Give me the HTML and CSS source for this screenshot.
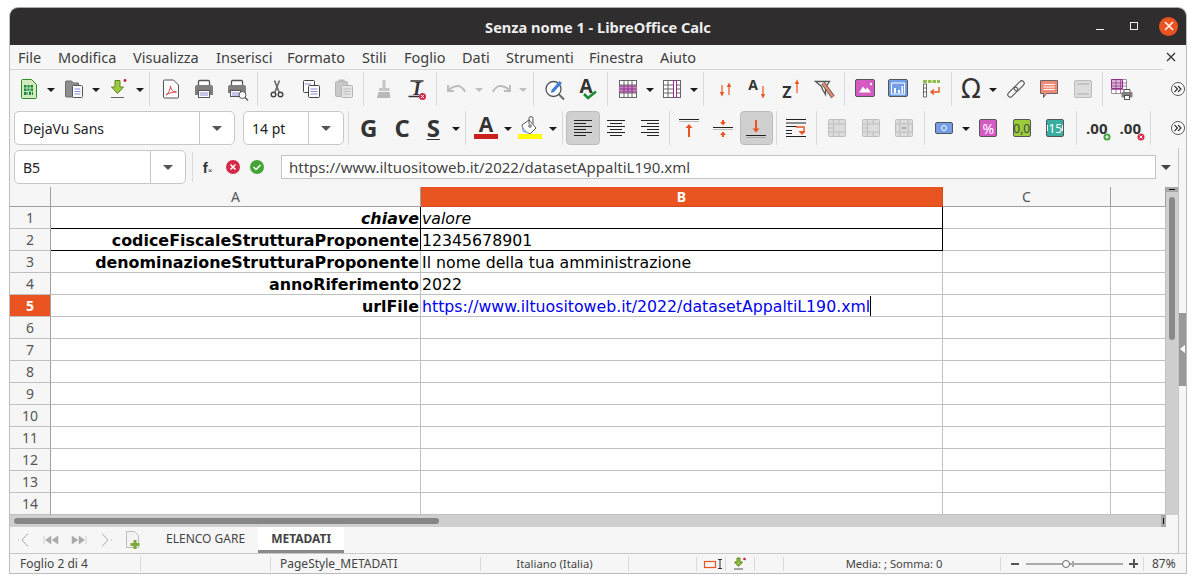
FILE: index.html
```html
<!DOCTYPE html>
<html lang="it">
<head>
  <meta charset="UTF-8">
  <title>Senza nome 1 - LibreOffice Calc</title>
  <link rel="stylesheet" href="styles.css">
</head>
<body>
<div class="window">

  <!-- title bar -->
  <div class="titlebar">
    <span class="title">Senza nome 1 - LibreOffice Calc</span>
    <div class="winbtns">
      <span class="win-min"></span>
      <span class="win-max"></span>
      <span class="win-close"><svg width="10" height="10" viewBox="0 0 10 10"><path d="M1 1l8 8M9 1l-8 8" stroke="#fff" stroke-width="1.5"/></svg></span>
    </div>
  </div>

  <!-- menu -->
  <div class="menubar">
    <span class="menu m1">File</span>
    <span class="menu m2">Modifica</span>
    <span class="menu m3">Visualizza</span>
    <span class="menu m4">Inserisci</span>
    <span class="menu m5">Formato</span>
    <span class="menu m6">Stili</span>
    <span class="menu m7">Foglio</span>
    <span class="menu m8">Dati</span>
    <span class="menu m9">Strumenti</span>
    <span class="menu m10">Finestra</span>
    <span class="menu m11">Aiuto</span>
    <span class="menu-close"><svg width="10" height="10" viewBox="0 0 10 10"><path d="M1 1l8 8M9 1l-8 8" stroke="#333" stroke-width="1.3"/></svg></span>
  </div>

  <!-- standard toolbar -->
  <div class="toolbar row1">
    <span class="btn"><svg class="ic" viewBox="0 0 24 24"><path d="M4.500 3.500a1 1 0 0 1 1-1h9l5 5v13a1 1 0 0 1-1 1h-13a1 1 0 0 1-1-1z" fill="#d3e9bf" stroke="#2f8f23"/><path d="M7 8h9v10H7z" fill="#1d8a35"/><path d="M7 11h9M7 14.500h9M10 8v10M13 8v10" stroke="#fff" stroke-width=".7"/><path d="M11.500 18v-4h3v4" fill="#1d8a35" stroke="#fff" stroke-width=".7"/></svg></span>
    <span class="arr"></span>
    <span class="btn"><svg class="ic" viewBox="0 0 24 24"><path d="M3.500 19V5a1 1 0 0 1 1-1h5l2 2h5v14h-12a1 1 0 0 1-1-1z" fill="#8e8e8e" stroke="#6a6a6a"/><rect x="10.500" y="8.500" width="10" height="12" rx="1" fill="#fff" stroke="#555"/><path d="M12.500 12h6M12.500 14.500h6M12.500 17h6" stroke="#8a8ad8"/></svg></span>
    <span class="arr"></span>
    <span class="btn"><svg class="ic" viewBox="0 0 24 24"><path d="M9 3.500h5V10h3.500L11.500 16.500 5.500 10H9z" fill="#9ccb3b" stroke="#5f8420"/><path d="M5 20.500h13" stroke="#666"/><circle cx="19" cy="3.500" r="1.400" fill="#d4123f"/></svg></span>
    <span class="arr"></span>
    <span class="sep sep8"></span>
    <span class="btn"><svg class="ic" viewBox="0 0 24 24"><path d="M4.500 4a1 1 0 0 1 1-1h9l5 5v12a1 1 0 0 1-1 1h-13a1 1 0 0 1-1-1z" fill="#fff" stroke="#555"/><path d="M7 18c2-1 4-5 4.500-9 .5 4 2.500 6 6 6-3 0-7 .5-10.500 3z" fill="none" stroke="#e0393e"/></svg></span>
    <span class="btn"><svg class="ic" viewBox="0 0 24 24"><path d="M6.500 8V4.500a1 1 0 0 1 1-1h9a1 1 0 0 1 1 1V8" fill="#fff" stroke="#555" stroke-width="1.300"/><path d="M5 8h14a2 2 0 0 1 2 2v8H3v-8a2 2 0 0 1 2-2z" fill="#7f7f7f"/><rect x="6.500" y="13.500" width="11" height="7" fill="#fff" stroke="#555"/><path d="M8 16h8M8 18h8" stroke="#8a8ad8"/></svg></span>
    <span class="btn"><svg class="ic" viewBox="0 0 24 24"><path d="M5.500 8V4.500a1 1 0 0 1 1-1h9a1 1 0 0 1 1 1V8" fill="#fff" stroke="#555" stroke-width="1.300"/><path d="M4 8h14a2 2 0 0 1 2 2v6H2v-6a2 2 0 0 1 2-2z" fill="#7f7f7f"/><rect x="4.500" y="13.500" width="10" height="6" fill="#fff" stroke="#555"/><path d="M6 16h7M6 18h7" stroke="#8a8ad8"/><circle cx="16.500" cy="18" r="3.500" fill="#fff" stroke="#555"/><path d="M19 20.500l3 3" stroke="#555" stroke-width="1.300"/></svg></span>
    <span class="sep"></span>
    <span class="btn"><svg class="ic" viewBox="0 0 24 24"><path d="M9.500 3.500l4.500 11.500M14.500 3.500L10 15" stroke="#666" stroke-width="1.600"/><circle cx="8.500" cy="17.500" r="2.300" fill="none" stroke="#444" stroke-width="1.400"/><circle cx="15.500" cy="17.500" r="2.300" fill="none" stroke="#444" stroke-width="1.400"/></svg></span>
    <span class="btn"><svg class="ic" viewBox="0 0 24 24"><rect x="4.500" y="3.500" width="11" height="12" rx="1" fill="#fff" stroke="#444"/><rect x="9.500" y="8.500" width="11" height="12" rx="1" fill="#fff" stroke="#444"/><path d="M6 7h6M11.500 12h7M11.500 14.500h7M11.500 17h7" stroke="#8a8ad8"/></svg></span>
    <span class="btn"><svg class="ic" viewBox="0 0 24 24"><rect x="3.500" y="4.500" width="12" height="15" rx="1" fill="#c8c8c8" stroke="#b5b5b5"/><rect x="6.500" y="2.500" width="6" height="3" fill="#bbb"/><rect x="9.500" y="8.500" width="11" height="12" rx="1" fill="#e4e4e4" stroke="#b5b5b5"/><path d="M11.500 12h7M11.500 14.500h7M11.500 17h7" stroke="#bbb"/></svg></span>
    <span class="sep"></span>
    <span class="btn"><svg class="ic" viewBox="0 0 24 24"><path d="M10.500 3h3v8h4v3H7v-3h3.500z" fill="#c6c6c6"/><path d="M6.500 15h11l1 6H5z" fill="#b9b9b9"/></svg></span>
    <span class="btn"><svg class="ic" viewBox="0 0 24 24"><text class="clear-i" x="12" y="18" text-anchor="middle">I</text><path d="M5.500 4h13M3.500 19.500h12" stroke="#333" stroke-width="1.600"/><circle cx="17.500" cy="19.500" r="3.500" fill="#d6294a"/><path d="M16 18l3 3M19 18l-3 3" stroke="#fff"/></svg></span>
    <span class="sep"></span>
    <span class="btn"><svg class="ic" viewBox="0 0 24 24"><path d="M3 8v6h6M3.500 13.500C6 9.500 13 8 16 10c2.500 1.500 3.500 3.500 4 5" fill="none" stroke="#bdbdbd" stroke-width="2"/></svg></span>
    <span class="arr off"></span>
    <span class="btn"><svg class="ic" viewBox="0 0 24 24"><path d="M21 8v6h-6M20.500 13.500C18 9.500 11 8 8 10c-2.500 1.500-3.500 3.500-4 5" fill="none" stroke="#bdbdbd" stroke-width="2"/></svg></span>
    <span class="arr off"></span>
    <span class="sep sep9"></span>
    <span class="btn"><svg class="ic" viewBox="0 0 24 24"><circle cx="10.500" cy="12" r="7.500" fill="#fff" stroke="#555" stroke-width="1.300"/><path d="M16 17.500l5 5" stroke="#666" stroke-width="2"/><path d="M8.500 13l8-9 2.500 2-8 9-3 1z" fill="#3f7fd8"/></svg></span>
    <span class="btn"><svg class="ic" viewBox="0 0 24 24"><text class="spell-a" x="10" y="16" text-anchor="middle">A</text><path d="M8 17l4 4 8-6.500" fill="none" stroke="#1e8a33" stroke-width="2.600"/></svg></span>
    <span class="sep"></span>
    <span class="btn"><svg class="ic" viewBox="0 0 24 24"><rect x="3.500" y="3.500" width="17" height="17" fill="#fff" stroke="#666"/><path d="M3.500 8h17M3.500 16h17M8 3.500v17M12 3.500v17M16 3.500v17" stroke="#666"/><path d="M3.500 9h17v6h-17z" fill="#c58ac1"/><path d="M3.500 9h17M3.500 12h17M3.500 15h17M8 9v6M12 9v6M16 9v6" stroke="#93308c"/></svg></span>
    <span class="arr"></span>
    <span class="btn"><svg class="ic" viewBox="0 0 24 24"><rect x="3.500" y="3.500" width="17" height="17" fill="#fff" stroke="#666"/><path d="M3.500 8h17M3.500 12h17M3.500 16h17M8 3.500v17" stroke="#666"/><path d="M13.500 3.500h3v17h-3z" fill="#fff" stroke="#93308c"/></svg></span>
    <span class="arr"></span>
    <span class="sep sep8"></span>
    <span class="btn"><svg class="ic" viewBox="0 0 24 24"><path d="M9 8v10M16 18V8" stroke="#e95420" stroke-width="1.200"/><path d="M6.800 15h4.400L9 19.500zM13.800 10h4.400L16 5.500z" fill="#e95420"/></svg></span>
    <span class="btn"><svg class="ic" viewBox="0 0 24 24"><text class="sort-a" x="7" y="13" text-anchor="middle">A</text><path d="M17 9v10" stroke="#e95420" stroke-width="1.200"/><path d="M14.800 17h4.400L17 21.500z" fill="#e95420"/></svg></span>
    <span class="btn"><svg class="ic" viewBox="0 0 24 24"><text class="sort-z" x="7" y="21" text-anchor="middle">Z</text><path d="M17 16V6" stroke="#e95420" stroke-width="1.200"/><path d="M14.800 7h4.400L17 2.500z" fill="#e95420"/></svg></span>
    <span class="btn"><svg class="ic" viewBox="0 0 24 24"><path d="M2.500 4.500h14l-4 6v7l-3-5-1-3z" fill="#fff" stroke="#555" stroke-width="1.300"/><path d="M10 6l10 14" stroke="#555" stroke-width="4"/><path d="M10 6l10 14" stroke="#e98a6c" stroke-width="2.400"/></svg></span>
    <span class="sep"></span>
    <span class="btn"><svg class="ic" viewBox="0 0 24 24"><rect x="2.500" y="2.500" width="19" height="17" rx="1.500" fill="#d65ac4" stroke="#555"/><path d="M6 15.500l4-6 2.500 3 2-2 3.500 5z" fill="#fff"/><circle cx="18" cy="7" r="1.200" fill="#fff"/></svg></span>
    <span class="btn"><svg class="ic" viewBox="0 0 24 24"><rect x="2.500" y="2.500" width="19" height="17" rx="1.500" fill="#739ee9" stroke="#555"/><path d="M5.500 6h13v11h-13z" fill="none" stroke="#fff"/><path d="M8 16v-5h2v5zM12 16v-3h2v3zM15.500 16V9h1.500v7z" fill="#fff"/></svg></span>
    <span class="btn"><svg class="ic" viewBox="0 0 24 24"><path d="M3 3h4v3H3zM8 3h3.500v3H8zM12.500 3H16v3h-3.500zM17 3h3v3h-3z" fill="#8fbf4d"/><path d="M3.500 7h3v13h-3zM3.500 11h3M3.500 15h3" fill="#fff" stroke="#666"/><path d="M19 10v5h-7M14 12.500L11 15l3 2.500" fill="none" stroke="#e95420" stroke-width="1.400"/></svg></span>
    <span class="sep"></span>
    <span class="btn"><span class="omega">Ω</span></span>
    <span class="arr"></span>
    <span class="btn"><svg class="ic" viewBox="0 0 24 24"><g transform="rotate(-45 12 12)" fill="none" stroke="#555" stroke-width="1.100"><rect x="1.500" y="9.500" width="12" height="5" rx="2.500"/><rect x="10.500" y="9.500" width="12" height="5" rx="2.500"/></g></svg></span>
    <span class="btn"><svg class="ic" viewBox="0 0 24 24"><path d="M3.500 3.500h17v13h-11l-3 4v-4h-3z" fill="#f08a76" stroke="#666"/><path d="M6.500 7.500h11M6.500 10h11M6.500 12.500h11" stroke="#fff"/></svg></span>
    <span class="btn"><svg class="ic" viewBox="0 0 24 24"><rect x="3.500" y="3.500" width="17" height="17" rx="1.500" fill="#dcdcdc" stroke="#bcbcbc"/><path d="M6 7h12M6 17h12" stroke="#bcbcbc" stroke-width="1.500"/></svg></span>
    <span class="sep"></span>
    <span class="btn"><svg class="ic print-area" viewBox="0 0 24 24"><path d="M1.500 1.500h15v14h-15z" fill="#fff" stroke="#999"/><path d="M1.500 1.500h11v9h-11z" fill="#d7b3d4" stroke="#93308c"/><path d="M1.500 5h15M1.500 8h15M1.500 11.500h15M6 1.500v14M10.500 1.500v14" stroke="#93308c" stroke-width=".7"/><path d="M14 14v-2.500h6V14" fill="#fff" stroke="#555"/><rect x="11.500" y="14" width="11" height="5.500" rx="1" fill="#7f7f7f"/><rect x="14.500" y="17.500" width="5" height="4" fill="#fff" stroke="#555"/></svg></span>
    <span class="more"><svg width="16" height="16" viewBox="0 0 16 16"><circle cx="8" cy="8" r="6.500" fill="#fff" stroke="#555"/><path d="M4.500 5l3 3-3 3M8 5l3 3-3 3" fill="none" stroke="#333" stroke-width="1.200"/></svg></span>
  </div>

  <!-- formatting toolbar -->
  <div class="toolbar row2">
    <div class="combo font-combo"><span class="combo-val">DejaVu Sans</span><span class="combo-btn"></span></div>
    <div class="combo size-combo"><span class="combo-val">14 pt</span><span class="combo-btn"></span></div>
    <span class="sep sep8"></span>
    <span class="btn letter">G</span>
    <span class="btn letter">C</span>
    <span class="btn letter under tight">S</span>
    <span class="arr"></span>
    <span class="sep sep8"></span>
    <span class="btn"><svg class="ic" viewBox="0 0 24 24"><text class="color-a" x="12" y="16" text-anchor="middle">A</text><path d="M0 18h24v5H0z" fill="#c9211e"/></svg></span>
    <span class="arr"></span>
    <span class="btn"><svg class="ic" viewBox="0 0 24 24"><path d="M4 9l7-5 7 8-6 6-7-4z" fill="#fff" stroke="#555"/><path d="M4 9l3 5 5 4-7-2z" fill="#8fb3d9"/><path d="M11 8V2.500a2 2 0 0 1 4 0V8" fill="none" stroke="#555"/><circle cx="12" cy="10" r="1.300" fill="#fff" stroke="#555"/><path d="M0 18h24v5H0z" fill="#ffff00"/></svg></span>
    <span class="arr"></span>
    <span class="sep sep8"></span>
    <span class="btn active"><svg class="ic" viewBox="0 0 24 24"><path d="M3 4.500h18M3 7.500h12M3 10.500h18M3 13.500h12M3 16.500h18M3 19.500h12" stroke="#222"/></svg></span>
    <span class="btn"><svg class="ic" viewBox="0 0 24 24"><path d="M3 4.500h18M6 7.500h12M3 10.500h18M6 13.500h12M3 16.500h18M6 19.500h12" stroke="#222"/></svg></span>
    <span class="btn"><svg class="ic" viewBox="0 0 24 24"><path d="M3 4.500h18M9 7.500h12M3 10.500h18M9 13.500h12M3 16.500h18M9 19.500h12" stroke="#222"/></svg></span>
    <span class="sep"></span>
    <span class="btn"><svg class="ic" viewBox="0 0 24 24"><path d="M2 3.500h20" stroke="#222"/><path d="M2 5.500h20" stroke="#bbb"/><path d="M12 21V11" stroke="#e95420" stroke-width="2"/><path d="M8.500 12L12 8l3.500 4z" fill="#e95420"/></svg></span>
    <span class="btn"><svg class="ic" viewBox="0 0 24 24"><path d="M2 11.500h20" stroke="#222"/><path d="M2 13.500h20" stroke="#bbb"/><path d="M12 4v3M12 17v4" stroke="#e95420" stroke-width="2"/><path d="M9 6h6l-3 3.500zM9 19h6l-3-3.500z" fill="#e95420"/></svg></span>
    <span class="btn active"><svg class="ic" viewBox="0 0 24 24"><path d="M2 19.500h20" stroke="#222"/><path d="M2 21.500h20" stroke="#aaa"/><path d="M12 4v9" stroke="#e95420" stroke-width="2"/><path d="M8.500 12.500h7L12 16.500z" fill="#e95420"/></svg></span>
    <span class="sep"></span>
    <span class="btn"><svg class="ic" viewBox="0 0 24 24"><path d="M2 3.500h20M2 7h20M2 20.500h20" stroke="#222"/><path d="M2 10.500h11M2 14.500h6M2 17.500h6" stroke="#222"/><path d="M12 11h8v5h-3" fill="none" stroke="#e95420" stroke-width="1.400"/><path d="M14.500 15h7l-3.500 4z" fill="#e95420"/></svg></span>
    <span class="sep sep8"></span>
    <span class="btn"><svg class="ic" viewBox="0 0 24 24"><rect x="3.500" y="3.500" width="17" height="17" rx="1" fill="#dcdcdc" stroke="#bebebe"/><path d="M3.500 8h17M3.500 16h17M8.500 3.500v17M14 3.500V8M14 16v4.500M3.500 12h5" stroke="#bebebe"/></svg></span>
    <span class="btn"><svg class="ic" viewBox="0 0 24 24"><rect x="3.500" y="3.500" width="17" height="17" rx="1" fill="#dcdcdc" stroke="#bebebe"/><path d="M3.500 8h17M3.500 16h17M8.500 3.500v17M14 3.500V8M14 16v4.500M3.500 12h5" stroke="#bebebe"/></svg></span>
    <span class="btn"><svg class="ic" viewBox="0 0 24 24"><rect x="3.500" y="3.500" width="17" height="17" rx="1" fill="#dcdcdc" stroke="#bebebe"/><path d="M3.500 8h17M3.500 16h17M8 3.500v17M16 3.500v17" stroke="#bebebe"/><path d="M10 12h1.500M12.500 12H14" stroke="#999" stroke-width="2"/></svg></span>
    <span class="sep"></span>
    <span class="btn"><svg class="ic" viewBox="0 0 24 24"><rect x="3.500" y="6.500" width="17" height="11" rx="1.500" fill="#739ee9" stroke="#555"/><circle cx="12" cy="12" r="2.500" fill="none" stroke="#fff"/></svg></span>
    <span class="arr"></span>
    <span class="btn"><span class="numbtn nb-pct">%</span></span>
    <span class="btn"><span class="numbtn nb-num">0,0</span></span>
    <span class="btn"><span class="numbtn nb-date">15</span></span>
    <span class="sep sep8"></span>
    <span class="btn"><span class="dec">.00</span><svg class="dec-badge" width="8" height="8" viewBox="0 0 8 8"><circle cx="4" cy="4" r="3.500" fill="#3a9f3a"/><path d="M4 1.800v4.400M1.800 4h4.400" stroke="#fff"/></svg></span>
    <span class="btn"><span class="dec">.00</span><svg class="dec-badge" width="8" height="8" viewBox="0 0 8 8"><circle cx="4" cy="4" r="3.500" fill="#d6294a"/><path d="M2.500 2.500l3 3M5.500 2.500l-3 3" stroke="#fff"/></svg></span>
    <span class="sep"></span>
    <span class="more"><svg width="16" height="16" viewBox="0 0 16 16"><circle cx="8" cy="8" r="6.500" fill="#fff" stroke="#555"/><path d="M4.500 5l3 3-3 3M8 5l3 3-3 3" fill="none" stroke="#333" stroke-width="1.200"/></svg></span>
  </div>

  <!-- formula bar -->
  <div class="formulabar railed">
    <div class="combo name-combo"><span class="combo-val">B5</span><span class="combo-btn"></span></div>
    <span class="sep"></span>
    <span class="fx">f<small>×</small></span>
    <svg class="fbtn" width="16" height="16" viewBox="0 0 16 16"><circle cx="8" cy="8" r="7" fill="#d6294a"/><path d="M5.500 5.500l5 5M10.500 5.500l-5 5" stroke="#fff" stroke-width="1.500"/></svg>
    <svg class="fbtn" width="16" height="16" viewBox="0 0 16 16"><circle cx="8" cy="8" r="7" fill="#43a535"/><path d="M4.500 8l2.500 2.500 4.500-4.500" fill="none" stroke="#fff" stroke-width="1.500"/></svg>
    <div class="formula-input">https://www.iltuositoweb.it/2022/datasetAppaltiL190.xml</div>
    <span class="formula-arrow"></span>
  </div>

  <!-- sheet -->
  <div class="workarea">
    <div class="sheet">
      <div class="corner"></div><div class="colhead">A</div><div class="colhead sel">B</div><div class="colhead">C</div><div class="colhead"></div>

      <div class="rowhead">1</div><div class="cell key blk ital">chiave</div><div class="cell blk ital">valore</div><div class="cell"></div><div class="cell"></div>
      <div class="rowhead">2</div><div class="cell key blk">codiceFiscaleStrutturaProponente</div><div class="cell blk">12345678901</div><div class="cell"></div><div class="cell"></div>
      <div class="rowhead">3</div><div class="cell key">denominazioneStrutturaProponente</div><div class="cell">Il nome della tua amministrazione</div><div class="cell"></div><div class="cell"></div>
      <div class="rowhead">4</div><div class="cell key">annoRiferimento</div><div class="cell">2022</div><div class="cell"></div><div class="cell"></div>
      <div class="rowhead sel">5</div><div class="cell key">urlFile</div><div class="cell link"><span class="editing">https://www.iltuositoweb.it/2022/datasetAppaltiL190.xml</span></div><div class="cell"></div><div class="cell"></div>
      <div class="rowhead">6</div><div class="cell"></div><div class="cell"></div><div class="cell"></div><div class="cell"></div>
      <div class="rowhead">7</div><div class="cell"></div><div class="cell"></div><div class="cell"></div><div class="cell"></div>
      <div class="rowhead">8</div><div class="cell"></div><div class="cell"></div><div class="cell"></div><div class="cell"></div>
      <div class="rowhead">9</div><div class="cell"></div><div class="cell"></div><div class="cell"></div><div class="cell"></div>
      <div class="rowhead">10</div><div class="cell"></div><div class="cell"></div><div class="cell"></div><div class="cell"></div>
      <div class="rowhead">11</div><div class="cell"></div><div class="cell"></div><div class="cell"></div><div class="cell"></div>
      <div class="rowhead">12</div><div class="cell"></div><div class="cell"></div><div class="cell"></div><div class="cell"></div>
      <div class="rowhead">13</div><div class="cell"></div><div class="cell"></div><div class="cell"></div><div class="cell"></div>
      <div class="rowhead">14</div><div class="cell"></div><div class="cell"></div><div class="cell"></div><div class="cell"></div>
    </div>
    <div class="vscroll">
      <span class="vsplit"></span>
      <span class="vthumb"></span>
    </div>
    <div class="siderail">
      <span class="sidehandle"></span>
    </div>
  </div>

  <div class="hscroll-row railed">
    <div class="hscroll">
      <span class="hthumb"></span>
      <span class="hsplit"></span>
    </div>
  </div>

  <!-- sheet tabs -->
  <div class="tabbar railed">
    <div class="tabnav">
      <svg width="14" height="16" viewBox="0 0 14 16"><path d="M1 8h1M11 1.500L5 8l6 6.500" fill="none" stroke="#aaa"/></svg>
      <svg width="16" height="10" viewBox="0 0 16 10"><path d="M1 1v8M8 1L2.500 5 8 9zM15 1L9 5l6 4z" fill="#aaa" stroke="#aaa" stroke-width=".5"/></svg>
      <svg width="16" height="10" viewBox="0 0 16 10"><path d="M15 1v8M8 1l5.500 4L8 9zM1 1l6 4-6 4z" fill="#aaa" stroke="#aaa" stroke-width=".5"/></svg>
      <svg width="14" height="16" viewBox="0 0 14 16"><path d="M13 8h-1M3 1.500L9 8l-6 6.500" fill="none" stroke="#aaa"/></svg>
      <svg width="16" height="20" viewBox="0 0 16 20"><path d="M1.500 1.500h8l4 4v12h-12z" fill="#f3f3f3" stroke="#bbb"/><path d="M8.500 10h3v3h3v3h-3v3h-3v-3h-3v-3h3z" fill="#7da83a"/></svg>
    </div>
    <span class="tab">ELENCO GARE</span>
    <span class="tab current">METADATI</span>
  </div>

  <!-- status bar -->
  <div class="statusbar">
    <span class="st st-page">Foglio 2 di 4</span>
    <span class="st st-blank"></span>
    <span class="st st-style">PageStyle_METADATI</span>
    <span class="st st-lang">Italiano (Italia)</span>
    <span class="st st-a"></span>
    <span class="st st-b"><svg width="26" height="14" viewBox="0 0 26 14"><rect x="6.500" y="4.500" width="11" height="6" fill="none" stroke="#e95420" stroke-width="1.200"/><path d="M20 2.500h4M20 11.500h4M22 2.500v9" stroke="#333"/></svg></span>
    <span class="st st-b"><svg width="16" height="14" viewBox="0 0 16 14"><path d="M5 1h3v4h2.500L6.500 9.500 2.500 5H5z" fill="#8fbf3d" stroke="#5f8420"/><path d="M2 12h9" stroke="#555"/><circle cx="12.500" cy="2" r="1.300" fill="#d4123f"/></svg></span>
    <span class="st st-b"></span>
    <span class="st st-sum">Media: ; Somma: 0</span>
    <span class="st st-zoom">
      <i class="z-minus"></i>
      <span class="z-track"><i class="z-mid"></i><i class="z-thumb"></i></span>
      <i class="z-plus"></i>
    </span>
    <span class="st-pct">87%</span>
  </div>
</div>
</body>
</html>
```

FILE: styles.css
```css
* {
  box-sizing: border-box;
}
body {
  margin: 0;
  background: #fff;
  font-family: "Noto Sans", sans-serif;
  overflow: hidden;
}
.window {
  margin: 7px 0 0 9px;
  width: 1178px;
  height: 567px;
  display: flex;
  flex-direction: column;
  background: #f6f6f6;
  border: 1px solid #bdbdbd;
  border-top-color: #aaa;
  border-radius: 9px 9px 0 0;
  overflow: hidden;
}

/* the thin line right of the sheet */
.railed {
  position: relative;
}
.railed::after {
  content: "";
  position: absolute;
  left: 1168px;
  top: 0;
  bottom: 0;
  width: 1px;
  background: #c4c4c4;
}

/* title bar */
.titlebar {
  flex: 0 0 37px;
  position: relative;
  display: flex;
  align-items: center;
  justify-content: center;
  background: #2f2d2d;
}
.title {
  color: #eee;
  font-size: 14.6px;
  font-weight: 700;
}
.winbtns {
  position: absolute;
  right: 8px;
  top: 8px;
  display: flex;
  align-items: center;
  height: 20px;
}
.win-min {
  width: 8px;
  height: 1px;
  margin: 7px 26px 0 0;
  background: #eee;
}
.win-max {
  width: 8px;
  height: 8px;
  margin-right: 21px;
  border: 1px solid #eee;
}
.win-close {
  width: 19px;
  height: 19px;
  border-radius: 50%;
  background: #e95420;
  display: flex;
  align-items: center;
  justify-content: center;
}

/* menu */
.menubar {
  flex: 0 0 25px;
  display: flex;
  align-items: center;
  margin-right: 23px;
  padding-left: 8px;
  border-bottom: 1px solid #d4d4d4;
  position: relative;
}
.menu {
  font-size: 14.5px;
  color: #3d3d3d;
  white-space: nowrap;
}
.m1 { width: 40px; }
.m2 { width: 75px; }
.m3 { width: 83px; }
.m4 { width: 71px; }
.m5 { width: 75px; }
.m6 { width: 42px; }
.m7 { width: 58px; }
.m8 { width: 44px; }
.m9 { width: 83px; }
.m10 { width: 71px; }
.menu-close {
  position: absolute;
  right: -13px;
  top: 7px;
  line-height: 0;
}

/* toolbars */
.toolbar {
  display: flex;
  align-items: stretch;
}
.row1 {
  flex: 0 0 38px;
  padding: 2px 0 2px 2.25px;
}
.row2 {
  flex: 0 0 40px;
  padding: 3px 0 3px 4px;
}
.btn {
  flex: 0 0 33.5px;
  position: relative;
  display: flex;
  align-items: center;
  justify-content: center;
  border: 1px solid transparent;
  border-radius: 4px;
}
.btn.active {
  background: #d0d0d0;
  border-color: #bdbdbd;
}
.ic {
  width: 24px;
  height: 24px;
  flex: none;
  overflow: visible;
}
.arr {
  flex: 0 0 11px;
  display: flex;
  align-items: center;
  justify-content: center;
}
.arr::before {
  content: "";
  border: 4px solid transparent;
  border-top: 4px solid #1c1c1c;
  border-bottom: 0;
  margin-top: 2px;
}
.arr.off::before {
  border-top-color: #c0c0c0;
}
.sep {
  flex: 0 0 6px;
  display: flex;
  justify-content: center;
}
.sep8 { flex-basis: 8px; }
.sep9 { flex-basis: 9px; }
.sep::before {
  content: "";
  width: 1px;
  background: #dadada;
}
.more {
  flex: none;
  margin-left: auto;
  align-self: center;
  line-height: 0;
}

/* svg text bits */
.clear-i {
  font: italic 700 19px "Liberation Serif", serif;
  fill: #333;
}
.spell-a {
  font: 700 19px "Open Sans", sans-serif;
  fill: #333;
}
.sort-a {
  font: 700 14px "Open Sans", sans-serif;
  fill: #333;
}
.sort-z {
  font: 700 16px "Open Sans", sans-serif;
  fill: #333;
}
.color-a {
  font: 700 21px "Open Sans", sans-serif;
  fill: #333;
}
.omega {
  font: 26px/1 "DejaVu Sans", sans-serif;
  color: #333;
}
.print-area {
  margin-top: 2px;
}

/* combos */
.combo {
  display: flex;
  align-items: stretch;
  height: 34px;
  align-self: center;
  background: #fff;
  border: 1px solid #c8c8c8;
  border-radius: 5px;
}
.combo-val {
  flex: 1;
  align-self: center;
  padding-left: 8px;
  font-size: 14px;
  color: #222;
}
.combo-btn {
  flex: 0 0 35px;
  display: flex;
  align-items: center;
  justify-content: center;
  border-left: 1px solid #c8c8c8;
}
.combo-btn::before {
  content: "";
  border: 5px solid transparent;
  border-top: 5px solid #555;
  border-bottom: 0;
}
.font-combo {
  flex: 0 0 221px;
  margin-right: 8px;
}
.size-combo {
  flex: 0 0 101px;
}
.name-combo {
  flex: 0 0 172px;
}
.letter {
  font: 700 24px/1 "Open Sans", sans-serif;
  color: #333;
}
.under {
  text-decoration: underline;
  text-decoration-thickness: 1px;
  text-underline-offset: 2px;
}
.tight {
  margin-left: -2.5px;
}
.numbtn {
  position: relative;
  width: 18px;
  height: 18px;
  display: flex;
  align-items: center;
  justify-content: center;
  border: 1px solid #555;
  border-radius: 2px;
  font-size: 12px;
  white-space: nowrap;
  overflow: hidden;
}
.nb-pct {
  background: #d65ac4;
  color: #fff;
  font-size: 14px;
}
.nb-num {
  background: #9ccb3b;
  color: #444;
}
.nb-date {
  background: #38ada0;
  color: #fff;
}
.nb-date::before,
.nb-date::after {
  content: "";
  position: absolute;
  top: 5px;
  width: 1px;
  height: 6px;
  background: #fff;
}
.nb-date::before { left: 0; }
.nb-date::after { right: 0; }
.dec {
  font: 700 15px "Open Sans", sans-serif;
  color: #333;
}
.dec-badge {
  position: absolute;
  left: 22px;
  top: 21px;
}

/* formula bar */
.formulabar {
  flex: 0 0 39px;
  display: flex;
  align-items: center;
  padding: 0 0 1px 4px;
}
.formulabar .sep {
  height: 30px;
  flex-basis: 12px;
}
.fx {
  width: 19px;
  font: 700 15px "Liberation Sans", sans-serif;
  color: #333;
  text-align: center;
}
.fx small {
  font-size: 8px;
  font-weight: 400;
}
.fbtn {
  margin-left: 8px;
}
.formula-input {
  width: 875px;
  height: 24px;
  margin-left: 16px;
  padding-left: 7px;
  background: #fff;
  border: 1px solid #c4c4c4;
  font-size: 15px;
  line-height: 22px;
  color: #444;
  white-space: nowrap;
}
.formula-arrow {
  margin-left: 5px;
  border: 5px solid transparent;
  border-top: 5px solid #444;
  border-bottom: 0;
}

/* sheet */
.workarea {
  flex: 0 0 328px;
  display: flex;
}
.sheet {
  flex: 0 0 1156px;
  display: grid;
  grid-template-columns: 41px 370px 522px 168px 55px;
  grid-template-rows: 20px repeat(14, 22px);
  background: #fff;
  overflow: hidden;
}
.corner,
.colhead {
  background: #f6f6f6;
  border-right: 1px solid #a0a0a0;
  border-bottom: 1px solid #a0a0a0;
}
.colhead {
  font-size: 14px;
  line-height: 19px;
  text-align: center;
  color: #555;
}
.colhead:last-child {
  border-right: 0;
}
.colhead.sel {
  background: #e95420;
  border-color: #d04a1c;
  color: #fff;
  font-weight: 700;
}
.rowhead {
  background: #f6f6f6;
  border-right: 1px solid #a0a0a0;
  border-bottom: 1px solid #c0c0c0;
  font-size: 14px;
  line-height: 22px;
  text-align: center;
  color: #555;
}
.rowhead.sel {
  background: #e95420;
  color: #fff;
  font-weight: 700;
}
.cell {
  padding: 0 1px;
  border-right: 1px solid #c0c0c0;
  border-bottom: 1px solid #c0c0c0;
  font: 15.75px/23px "DejaVu Sans", sans-serif;
  color: #000;
  white-space: nowrap;
  overflow: hidden;
}
.cell.blk {
  border-color: #000;
}
.key {
  font-size: 15.9px;
  font-weight: 700;
  text-align: right;
}
.ital {
  font-style: italic;
}
.link {
  color: #0000ee;
}
.editing {
  border-right: 1px solid #000;
  padding: 1px 0;
}

/* scrollbars */
.vscroll {
  flex: 0 0 12px;
  position: relative;
  background: #cfcfcf;
}
.vsplit {
  position: absolute;
  left: 0;
  top: 0;
  width: 12px;
  height: 5px;
  background: #a8a8a8;
}
.vsplit::after {
  content: "";
  position: absolute;
  left: 3px;
  top: 2px;
  width: 6px;
  height: 1px;
  background: #111;
}
.vthumb {
  position: absolute;
  left: 3px;
  top: 10px;
  width: 6px;
  height: 143px;
  background: #8a8a8a;
  border-radius: 3px;
}
.siderail {
  flex: 1;
  position: relative;
  border-left: 1px solid #c4c4c4;
}
.sidehandle {
  position: absolute;
  left: 0;
  top: 126px;
  width: 7px;
  height: 73px;
  background: #999;
}
.sidehandle::before {
  content: "";
  position: absolute;
  left: 1px;
  top: 32px;
  border: 4px solid transparent;
  border-right: 5px solid #fff;
  border-left: 0;
}
.hscroll-row {
  flex: 0 0 12px;
}
.hscroll {
  height: 12px;
  position: relative;
  background: #cfcfcf;
  width: 1156px;
}
.hthumb {
  position: absolute;
  left: 4px;
  top: 3px;
  width: 425px;
  height: 6px;
  background: #868686;
  border-radius: 3px;
}
.hsplit {
  position: absolute;
  right: 0;
  top: 0;
  width: 5px;
  height: 12px;
  background: #a8a8a8;
}
.hsplit::after {
  content: "";
  position: absolute;
  left: 2px;
  top: 3px;
  width: 1px;
  height: 6px;
  background: #111;
}

/* sheet tabs */
.tabbar {
  flex: 0 0 26px;
  display: flex;
  align-items: stretch;
  border-bottom: 1px solid #c8c8c8;
}
.tabnav {
  flex: 0 0 143px;
  display: flex;
  align-items: center;
  gap: 12px;
  padding-left: 7px;
}
.tab {
  padding: 0 13px;
  font-size: 12px;
  line-height: 23px;
  color: #444;
  white-space: nowrap;
}
.tab.current {
  background: #fff;
  border-bottom: 3px solid #8a8a8a;
  font-weight: 700;
}

/* status bar */
.statusbar {
  flex: 1;
  display: flex;
  align-items: center;
  font-size: 12px;
  color: #444;
}
.st {
  height: 14px;
  line-height: 14px;
  border-right: 1px solid #dadada;
  white-space: nowrap;
}
.st svg {
  display: block;
  margin: 0 auto;
}
.st-page { flex: 0 0 131px; padding-left: 10px; }
.st-blank { flex: 0 0 130px; }
.st-style { flex: 0 0 210px; padding-left: 9px; }
.st-lang { flex: 0 0 148px; text-align: center; font-size: 11.3px; }
.st-a { flex: 0 0 68px; }
.st-b { flex: 0 0 29px; }
.st-sum { flex: 0 0 217px; padding-left: 4px; text-align: center; font-size: 11.2px; }
.st-zoom {
  flex: 0 0 143px;
  display: flex;
  align-items: center;
  gap: 6px;
  padding-left: 10px;
}
.st-pct {
  padding-left: 8px;
  font-size: 12px;
}
.z-minus {
  width: 8px;
  height: 2px;
  background: #555;
}
.z-plus {
  width: 9px;
  height: 9px;
  background: linear-gradient(#555, #555) center / 9px 2px no-repeat,
    linear-gradient(#555, #555) center / 2px 9px no-repeat;
}
.z-track {
  flex: 0 0 97px;
  height: 2px;
  margin-left: 1px;
  position: relative;
  background: #aaa;
}
.z-thumb {
  position: absolute;
  left: 36px;
  top: -3px;
  width: 8px;
  height: 8px;
  background: #fff;
  border: 1px solid #666;
  border-radius: 50%;
}
.z-mid {
  position: absolute;
  left: 46px;
  top: -2px;
  width: 2px;
  height: 6px;
  background: #aaa;
}
```
